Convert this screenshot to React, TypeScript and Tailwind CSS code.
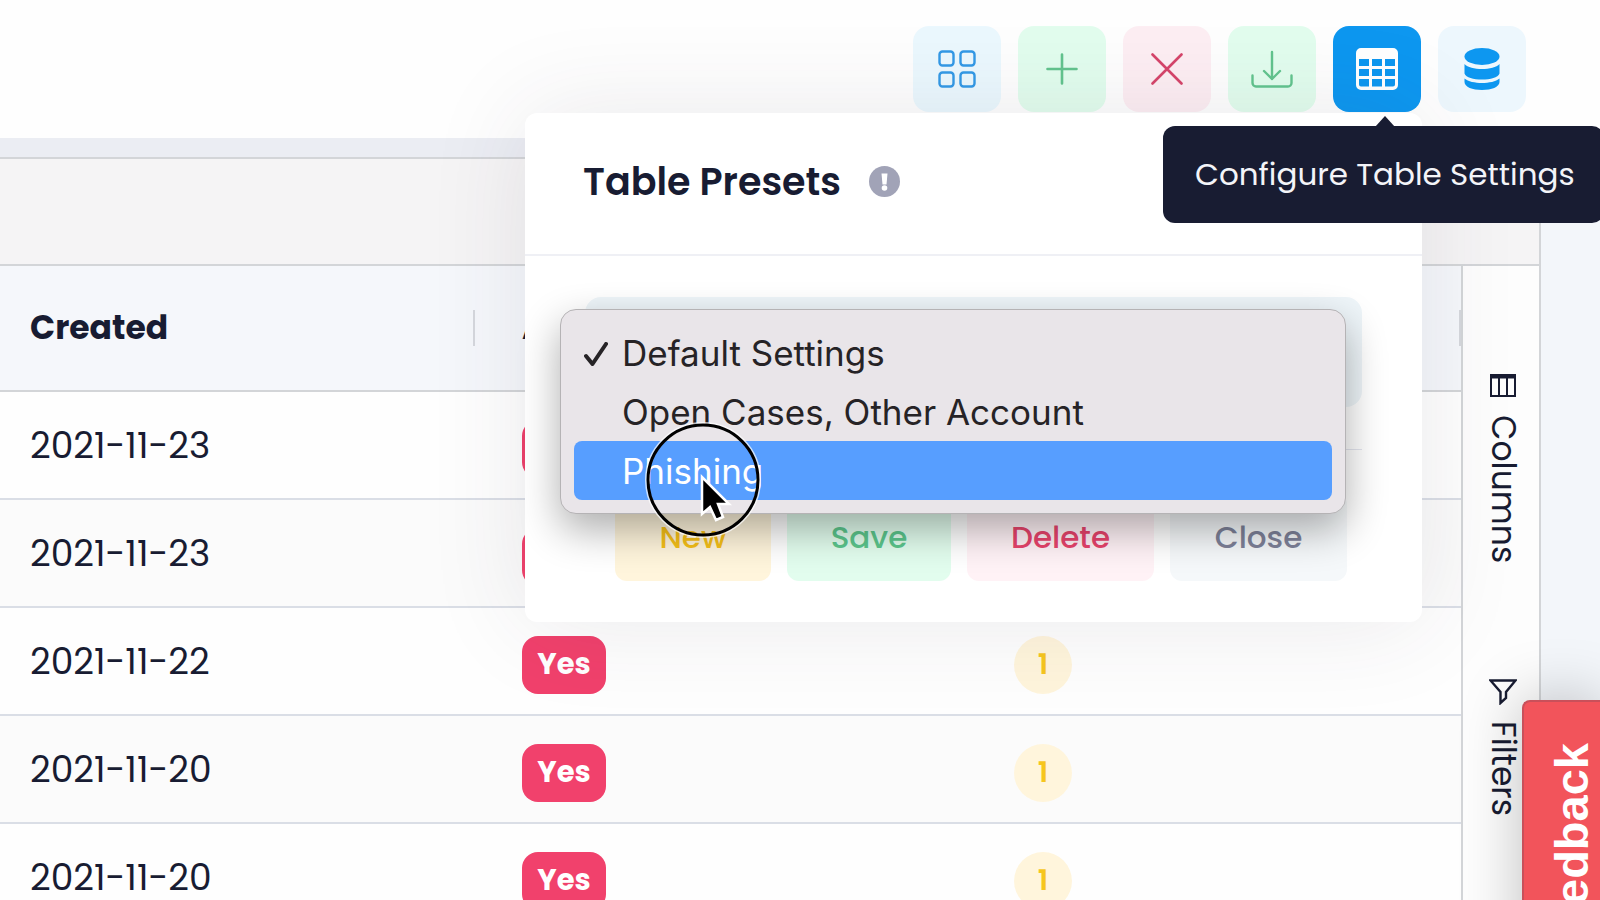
import React from 'react';

interface CaseRow {
  id: number;
  created: string;
  alert: string;
  count?: number;
}

const ROWS: CaseRow[] = [
  { id: 1, created: '2021-11-23', alert: 'Yes' },
  { id: 2, created: '2021-11-23', alert: 'Yes' },
  { id: 3, created: '2021-11-22', alert: 'Yes', count: 1 },
  { id: 4, created: '2021-11-20', alert: 'Yes', count: 1 },
  { id: 5, created: '2021-11-20', alert: 'Yes', count: 1 }
];

const PRESETS = ['Default Settings', 'Open Cases, Other Account', 'Phishing'];

const ACTIONS = [
  { label: 'New', className: 'w-[156px] bg-[#fff5dc] text-[#f6c018]' },
  { label: 'Save', className: 'w-[164px] bg-[#e2fdee] text-[#5cc78d]' },
  { label: 'Delete', className: 'w-[187px] bg-[#fff2f6] text-[#e8446c]' },
  { label: 'Close', className: 'w-[177px] bg-[#f5f8fa] text-[#7e8299]' }
];

const GridIcon = () => (
  <svg width="38" height="38" viewBox="0 0 38 38" fill="none" stroke="#3399e6" strokeWidth="2.400">
    <rect x="1.500" y="1.500" width="14" height="14" rx="3" />
    <rect x="22.500" y="1.500" width="14" height="14" rx="3" />
    <rect x="1.500" y="22.500" width="14" height="14" rx="3" />
    <rect x="22.500" y="22.500" width="14" height="14" rx="3" />
  </svg>
);

const PlusIcon = () => (
  <svg width="32" height="32" viewBox="0 0 32 32" stroke="#62c48e" strokeWidth="2.600" strokeLinecap="round">
    <path d="M16 1.500v29M1.500 16h29" />
  </svg>
);

const CrossIcon = () => (
  <svg width="32" height="32" viewBox="0 0 32 32" stroke="#d6456b" strokeWidth="2.600" strokeLinecap="round">
    <path d="M1.500 1.500l29 29M30.500 1.500l-29 29" />
  </svg>
);

const DownloadIcon = () => (
  <svg
    width="42"
    height="38"
    viewBox="0 0 42 38"
    fill="none"
    stroke="#62c48e"
    strokeWidth="2.400"
    strokeLinecap="round"
    strokeLinejoin="round"
  >
    <path d="M21 2v27M13 21l8 8 8-8" />
    <path d="M1.500 25.500v7.500a3.500 3.500 0 0 0 3.500 3.500h32a3.500 3.500 0 0 0 3.500-3.500v-7.500" />
  </svg>
);

const TableIcon = () => (
  <svg width="42" height="42" viewBox="0 0 42 42">
    <path
      fill="#ffffff"
      fillRule="evenodd"
      d="M5 0h32a5 5 0 0 1 5 5v32a5 5 0 0 1-5 5H5a5 5 0 0 1-5-5V5a5 5 0 0 1 5-5zM3 11h10v7H3zM16 11h10v7H16zM29 11h10v7H29zM3 21h10v7H3zM16 21h10v7H16zM29 21h10v7H29zM3 31h10v7.500H5a2 2 0 0 1-2-2zM16 31h10v7.500H16zM29 31h10v5.500a2 2 0 0 1-2 2h-8z"
    />
  </svg>
);

const DatabaseIcon = () => (
  <svg width="36" height="42" viewBox="0 0 36 42" fill="#0d97f0">
    <ellipse cx="18" cy="8.500" rx="17.500" ry="8.500" />
    <path d="M.5 16c3 3.500 10 5 17.500 5s14.500-1.500 17.500-5v9.500c-1.500 4-9 6-17.500 6S2 29.500.5 25.500z" />
    <path d="M.5 30.500C4 33.500 11 35 18 35s14-1.500 17.500-4.500V34c0 5-8 8-17.500 8S.5 39 .5 34z" />
  </svg>
);

const ColumnsIcon = () => (
  <svg width="26" height="23" viewBox="0 0 26 23" fill="none" stroke="#181c32" strokeWidth="2">
    <path d="M1 1h24v21H1zM9 4v18M17 4v18" />
    <path d="M0 2.500h26" strokeWidth="4" />
  </svg>
);

const FunnelIcon = () => (
  <svg width="28" height="26" viewBox="0 0 28 26" fill="none" stroke="#181c32" strokeWidth="2.400">
    <path d="M1.500 1.500h25L17 13v6l-5.500 5V13z" />
  </svg>
);

const InfoIcon = () => (
  <svg width="31" height="31" viewBox="0 0 31 31">
    <circle cx="15.500" cy="15.500" r="15.500" fill="#a1a3b7" />
    <path d="M12.500 7.500h6l-1 11h-4z" fill="#ffffff" />
    <circle cx="15.500" cy="22" r="2.800" fill="#ffffff" />
  </svg>
);

const ToolButton: React.FC<{ label: string; className: string; children: React.ReactNode }> = ({
  label,
  className,
  children
}) => (
  <button
    type="button"
    aria-label={label}
    className={`flex h-[86px] w-[88px] items-center justify-center rounded-2xl ${className}`}
  >
    {children}
  </button>
);

const PresetMenu = () => (
  <ul
    role="listbox"
    aria-label="Presets"
    className="absolute top-3 -left-[25px] w-[786px] rounded-2xl border border-[#b5b3b5] bg-[#e9e5e9] p-[13px] font-[Inter,sans-serif] shadow-[0_16px_40px_rgba(0,0,0,0.32)]"
  >
    {PRESETS.map((preset, index) => (
      <li
        key={preset}
        role="option"
        aria-selected={index === 0}
        className={`relative flex h-[59px] items-center rounded-lg pt-0.5 pl-12 text-[35px] ${
          preset === 'Phishing' ? 'bg-[#579eff] text-white' : 'text-[#262326]'
        }`}
      >
        {index === 0 && (
          <svg className="absolute left-[10px]" width="24" height="24" viewBox="0 0 24 24" fill="none" stroke="#262326" strokeWidth="4">
            <path d="M2 14l6.500 8L22 2" strokeLinecap="round" strokeLinejoin="round" />
          </svg>
        )}
        {preset}
      </li>
    ))}
    <li aria-hidden="true" className="pointer-events-none absolute top-[112px] left-[84px]">
      <svg width="116" height="116" viewBox="0 0 116 116" fill="none">
        <circle cx="58" cy="58" r="56" stroke="#ffffff" strokeOpacity="0.7" strokeWidth="4" />
        <circle cx="58" cy="58" r="55" stroke="#000000" strokeWidth="3" />
        <path
          d="M57 55v37l8-7 6 13 7-3-5-13h11z"
          fill="#000000"
          stroke="#ffffff"
          strokeWidth="2.500"
        />
      </svg>
    </li>
  </ul>
);

const PresetPanel = () => (
  <section className="absolute top-[113px] right-[178px] z-10 w-[897px] rounded-xl bg-white shadow-[0_0_100px_rgba(60,50,70,0.1)]">
    <div className="flex h-[143px] items-center gap-7 border-b-2 border-[#eff0f5] px-[58px] pb-1">
      <h2 className="text-[38px] font-semibold">Table Presets</h2>
      <InfoIcon />
    </div>
    <div className="px-[60px] py-[41px]">
      <div className="relative z-10">
        <select aria-label="Table preset" className="h-[110px] w-full appearance-none rounded-2xl bg-[#eef5f9] px-8 text-[32px]">
          {PRESETS.map((preset) => (
            <option key={preset}>{preset}</option>
          ))}
        </select>
        <PresetMenu />
      </div>
      <hr className="my-[42px] border-[#e4e6ef]" />
      <div className="flex justify-end gap-4 pr-[15px]">
        {ACTIONS.map((action) => (
          <button
            key={action.label}
            type="button"
            className={`h-[89px] rounded-xl pt-0.5 text-[31px] font-medium ${action.className}`}
          >
            {action.label}
          </button>
        ))}
      </div>
    </div>
  </section>
);

const Header = () => (
  <header className="relative flex justify-end gap-[17px] bg-[#fefefe] py-[26px] pr-[74px]">
    <ToolButton label="Grid view" className="bg-[#ebf8fe]">
      <GridIcon />
    </ToolButton>
    <ToolButton label="Add" className="bg-[#e2fdee]">
      <PlusIcon />
    </ToolButton>
    <ToolButton label="Remove" className="bg-[#fdeef3]">
      <CrossIcon />
    </ToolButton>
    <ToolButton label="Download" className="bg-[#e2fdee]">
      <DownloadIcon />
    </ToolButton>
    <div className="relative">
      <ToolButton label="Table settings" className="bg-[#0d97f0]">
        <TableIcon />
      </ToolButton>
      <div
        role="tooltip"
        className="absolute top-[100px] -left-[170px] z-20 flex h-[97px] w-[441px] items-center rounded-xl bg-[#181c32] pl-8 text-[31px] whitespace-nowrap text-[#f3f4f8]"
      >
        <svg className="absolute -top-[10px] left-[212px]" width="20" height="11" viewBox="0 0 20 11" fill="#181c32">
          <path d="M10 0l10 11H0z" />
        </svg>
        Configure Table Settings
      </div>
    </div>
    <ToolButton label="Data source" className="bg-[#edf7fd]">
      <DatabaseIcon />
    </ToolButton>
    <PresetPanel />
  </header>
);

const CaseTable = () => (
  <table className="w-full table-fixed border-collapse text-left">
    <colgroup>
      <col className="w-[475px]" />
      <col className="w-[492px]" />
      <col />
    </colgroup>
    <thead>
      <tr className="h-[125px] border-b-2 border-[#d3d5d8] bg-[#f5f7fb] text-[33px]">
        {['Created', 'Alert', ''].map((name) => (
          <th key={name} className="p-0 font-bold">
            <div
              className={`flex h-9 items-center border-r-2 border-[#d5d7dc] ${
                name === 'Created' ? 'pl-[30px]' : 'pl-[47px]'
              }`}
            >
              {name}
            </div>
          </th>
        ))}
      </tr>
    </thead>
    <tbody>
      {ROWS.map((row) => (
        <tr key={row.id} className="h-[108px] border-b-2 border-[#dadee6] odd:bg-[#fefefe] even:bg-[#fbfbfb]">
          <td className="p-0 pt-0.5 pl-[30px] text-[36px]">{row.created}</td>
          <td className="p-0 pt-2 pl-[47px]">
            <span className="flex h-[58px] w-[84px] items-center justify-center rounded-2xl bg-[#f1416c] text-[29px] font-bold text-white">
              {row.alert}
            </span>
          </td>
          <td className="p-0 pt-2 pl-[47px]">
            {row.count && (
              <span className="flex size-[58px] items-center justify-center rounded-full bg-[#fff5dc] text-[29px] font-semibold text-[#f6c61e]">
                {row.count}
              </span>
            )}
          </td>
        </tr>
      ))}
    </tbody>
  </table>
);

const SideBar = () => (
  <aside className="flex w-20 shrink-0 flex-col items-center border-x-2 border-[#d3d5d8] bg-[#fdfdfd] pt-[108px] pl-1 text-[33px]">
    <button type="button" className="flex flex-col items-center gap-[18px]">
      <ColumnsIcon />
      <span className="[writing-mode:vertical-rl]">Columns</span>
    </button>
    <button type="button" className="mt-[116px] flex flex-col items-center gap-4">
      <FunnelIcon />
      <span className="[writing-mode:vertical-rl]">Filters</span>
    </button>
  </aside>
);

const App: React.FC = () => (
  <div className="relative flex h-screen flex-col overflow-hidden bg-[#f3f6fa] font-[Poppins,Inter,sans-serif] text-[#181c32]">
    <Header />
    <main className="flex min-h-0 flex-1 flex-col pr-[59px]">
      <div className="-mr-[59px] h-[19px] shrink-0 bg-[#ebedf3]" />
      <div className="h-[109px] shrink-0 border-y-2 border-r-2 border-[#d3d5d8] bg-[#f5f4f5]" />
      <div className="flex min-h-0 flex-1">
        <div className="min-w-0 flex-1 overflow-hidden">
          <CaseTable />
        </div>
        <SideBar />
      </div>
    </main>
    <button
      type="button"
      className="absolute top-[700px] right-0 flex h-[300px] w-[78px] items-start justify-center rounded-tl-lg border-t-2 border-l-2 border-[#c9505a] bg-[#f2545b] pt-[41px] pl-5 font-['Liberation_Sans',sans-serif] text-[47px] font-bold text-white shadow-[0_0_60px_rgba(0,0,0,0.25)]"
    >
      <span className="rotate-180 [writing-mode:vertical-rl]">Feedback</span>
    </button>
  </div>
);

export default App;
